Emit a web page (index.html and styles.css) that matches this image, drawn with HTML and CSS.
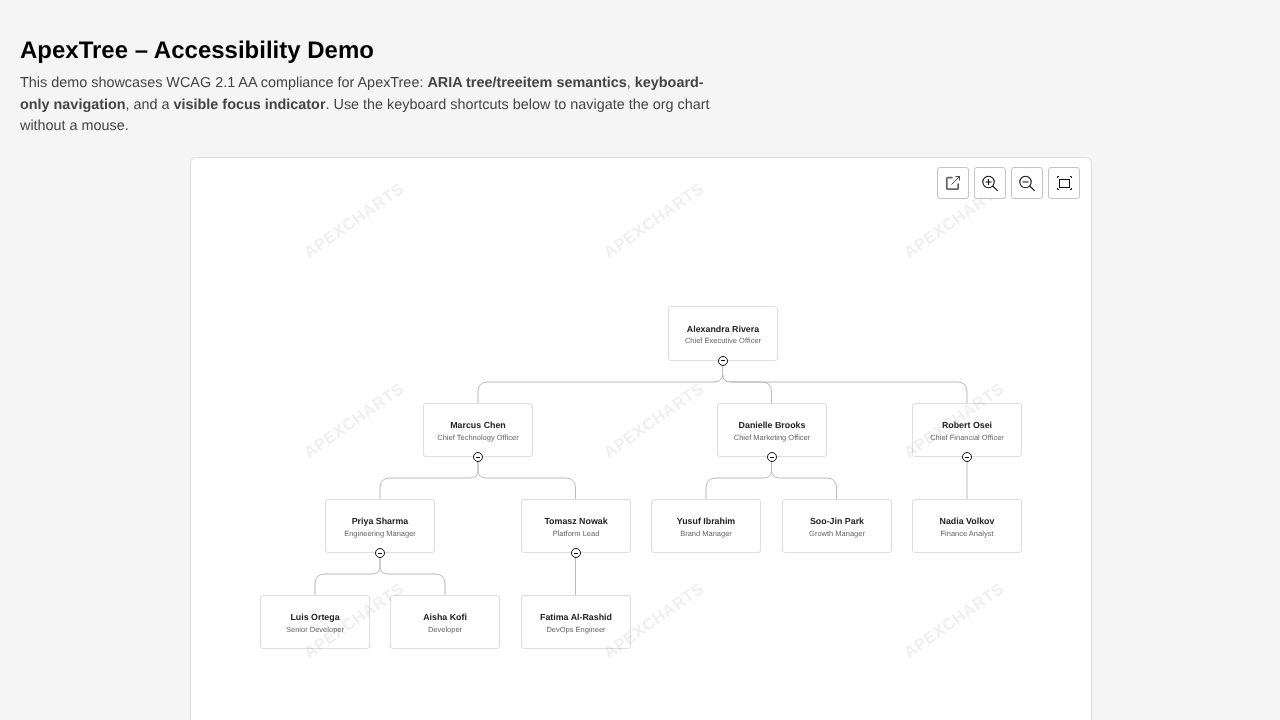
FILE: index.html
```html
<!DOCTYPE html>
<html lang="en">
<head>
<meta charset="utf-8">
<title>ApexTree – Accessibility Demo</title>
<link rel="stylesheet" href="styles.css">
</head>
<body>
<header class="intro">
  <h1>ApexTree – Accessibility Demo</h1>
  <p>This demo showcases WCAG 2.1 AA compliance for ApexTree: <strong>ARIA tree/treeitem semantics</strong>, <strong>keyboard-only navigation</strong>, and a <strong>visible focus indicator</strong>. Use the keyboard shortcuts below to navigate the org chart without a mouse.</p>
</header>
<main class="card">
  <div class="toolbar">
    <button class="tool" aria-label="Export">
      <svg width="16" height="16" viewBox="0 0 16 16" fill="none"><path d="M7.500 2.700H2.700a.9.9 0 0 0-.9.9v9.600a.9.9 0 0 0 .9.9h9.600a.9.9 0 0 0 .9-.9V8.500" stroke="#666" stroke-width="1.800"/><path d="M6.500 9.500 14.500 1.500M10.500 1.500h4v4" stroke="#333" stroke-width="0.900"/></svg>
    </button>
    <button class="tool" aria-label="Zoom in">
      <svg width="18" height="18" viewBox="0 0 18 18" fill="none" stroke="#111" stroke-width="1.100"><circle cx="7.500" cy="8" r="5.700"/><path d="M7.500 5v6M4.500 8h6M11.700 12l5 4.800"/></svg>
    </button>
    <button class="tool" aria-label="Zoom out">
      <svg width="18" height="18" viewBox="0 0 18 18" fill="none" stroke="#111" stroke-width="1.100"><circle cx="7.500" cy="8" r="5.700"/><path d="M4.500 8h6M11.700 12l5 4.800"/></svg>
    </button>
    <button class="tool" aria-label="Fit to screen">
      <svg width="16" height="16" viewBox="0 0 16 16" fill="none" stroke="#111" stroke-width="1"><rect x="3.500" y="4.500" width="10" height="8"/><path d="M1.500 3V1.500H3M14 1.500h1.500V3M15.500 13v1.500H14M3 14.500H1.500V13"/></svg>
    </button>
  </div>
  <div class="canvas">
    <svg class="edges" width="900" height="620" viewBox="0 0 900 620" fill="none">
      <path d="M531.500 203V216Q531.500 224 523 224H297Q287 224 287 234V245"/>
      <path d="M531.500 203V216Q531.500 224 540 224H570.500Q580.500 224 580.500 234V245"/>
      <path d="M531.500 203V216Q531.500 224 540 224H766Q776 224 776 234V245"/>
      <path d="M287 299V312Q287 320 279 320H199Q189 320 189 330V341"/>
      <path d="M287 299V312Q287 320 295 320H374.500Q384.500 320 384.500 330V341"/>
      <path d="M580.500 299V312Q580.500 320 572.500 320H525Q515 320 515 330V341"/>
      <path d="M580.500 299V312Q580.500 320 588.500 320H635.500Q645.500 320 645.500 330V341"/>
      <path d="M776 299V341"/>
      <path d="M189 395V408Q189 416 181 416H134Q124 416 124 426V437"/>
      <path d="M189 395V408Q189 416 197 416H244Q254 416 254 426V437"/>
      <path d="M384.500 395V437"/>
    </svg>

    <div class="node n-alexandra"><b>Alexandra Rivera</b><span>Chief Executive Officer</span><i class="toggle"></i></div>
    <div class="node n-marcus"><b>Marcus Chen</b><span>Chief Technology Officer</span><i class="toggle"></i></div>
    <div class="node n-danielle"><b>Danielle Brooks</b><span>Chief Marketing Officer</span><i class="toggle"></i></div>
    <div class="node n-robert"><b>Robert Osei</b><span>Chief Financial Officer</span><i class="toggle"></i></div>
    <div class="node n-priya"><b>Priya Sharma</b><span>Engineering Manager</span><i class="toggle"></i></div>
    <div class="node n-tomasz"><b>Tomasz Nowak</b><span>Platform Lead</span><i class="toggle"></i></div>
    <div class="node n-yusuf"><b>Yusuf Ibrahim</b><span>Brand Manager</span></div>
    <div class="node n-soojin"><b>Soo-Jin Park</b><span>Growth Manager</span></div>
    <div class="node n-nadia"><b>Nadia Volkov</b><span>Finance Analyst</span></div>
    <div class="node n-luis"><b>Luis Ortega</b><span>Senior Developer</span></div>
    <div class="node n-aisha"><b>Aisha Kofi</b><span>Developer</span></div>
    <div class="node n-fatima"><b>Fatima Al-Rashid</b><span>DevOps Engineer</span></div>

    <svg class="watermarks" width="900" height="620" viewBox="0 0 900 620" aria-hidden="true">
      <text transform="translate(166 67) rotate(-35)">APEXCHARTS</text>
      <text transform="translate(466 67) rotate(-35)">APEXCHARTS</text>
      <text transform="translate(766 67) rotate(-35)">APEXCHARTS</text>
      <text transform="translate(166 267) rotate(-35)">APEXCHARTS</text>
      <text transform="translate(466 267) rotate(-35)">APEXCHARTS</text>
      <text transform="translate(766 267) rotate(-35)">APEXCHARTS</text>
      <text transform="translate(166 467) rotate(-35)">APEXCHARTS</text>
      <text transform="translate(466 467) rotate(-35)">APEXCHARTS</text>
      <text transform="translate(766 467) rotate(-35)">APEXCHARTS</text>
    </svg>
  </div>
</main>
</body>
</html>
```
FILE: styles.css
```css
* { box-sizing: border-box; }
html, body { margin: 0; height: 720px; overflow: hidden; }
body {
  background: #f5f5f5;
  font-family: "Liberation Sans", Arial, sans-serif;
  text-rendering: geometricPrecision;
  padding: 37px 20px 0;
}
.intro { width: 700px; will-change: transform; }
h1 {
  margin: 0 0 8px;
  font-size: 24px;
  line-height: 28px;
  font-weight: 700;
  color: #000;
}
.intro p {
  margin: 0 0 19.200px;
  font-size: 14.400px;
  line-height: 21.600px;
  color: #444;
}
.card {
  position: relative;
  width: 902px;
  height: 700px;
  margin-left: 170px;
  background: #fff;
  border: 1px solid #ddd;
  border-radius: 6px;
}
.toolbar {
  position: absolute;
  top: 9px;
  right: 11px;
  display: flex;
  gap: 5px;
  z-index: 2;
}
.tool {
  width: 32px;
  height: 32px;
  padding: 0;
  display: flex;
  align-items: center;
  justify-content: center;
  background: #fff;
  border: 1px solid #c4c4c4;
  border-radius: 3px;
}
.canvas { position: relative; width: 900px; height: 620px; will-change: transform; }
.edges { position: absolute; inset: 0; }
.edges path { stroke: #bbb; stroke-width: 1; }
.watermarks { position: absolute; inset: 0; pointer-events: none; }
.watermarks text {
  font-family: "Liberation Sans", Arial, sans-serif;
  font-size: 16.500px;
  font-weight: 700;
  fill: #000;
  fill-opacity: 0.065;
  letter-spacing: 0.4px;
  text-anchor: middle;
}
.node {
  position: absolute;
  width: 110px;
  height: 54.500px;
  padding-top: 1.500px;
  display: flex;
  flex-direction: column;
  align-items: center;
  justify-content: center;
  gap: 2.500px;
  background: #fff;
  border: 1px solid #dedede;
  border-radius: 3px;
  white-space: nowrap;
  text-align: center;
}
.node b { font-size: 8.850px; line-height: 10px; color: #222; }
.node span { font-size: 7.500px; line-height: 9px; color: #666; }
.toggle {
  position: absolute;
  left: 50%;
  bottom: -6px;
  width: 10px;
  height: 10px;
  margin-left: -5.500px;
  background: #fff;
  border: 1px solid #111;
  border-radius: 50%;
}
.toggle::after {
  content: "";
  position: absolute;
  left: 2px;
  top: 3.500px;
  width: 4px;
  height: 1px;
  background: #111;
}
.n-alexandra { left: 477px; top: 148.400px; }
.n-marcus { left: 232px; top: 244.900px; }
.n-danielle { left: 526px; top: 244.900px; }
.n-robert { left: 721px; top: 244.900px; }
.n-priya { left: 134px; top: 340.900px; }
.n-tomasz { left: 330px; top: 340.900px; }
.n-yusuf { left: 460px; top: 340.900px; }
.n-soojin { left: 591px; top: 340.900px; }
.n-nadia { left: 721px; top: 340.900px; }
.n-luis { left: 69px; top: 436.900px; }
.n-aisha { left: 199px; top: 436.900px; }
.n-fatima { left: 330px; top: 436.900px; }
```
